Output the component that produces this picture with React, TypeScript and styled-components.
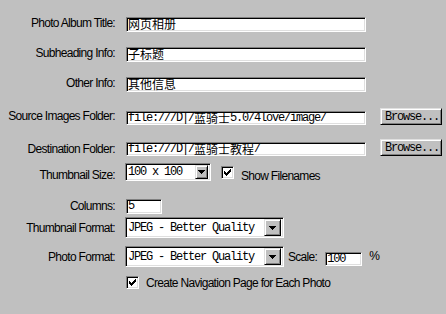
import React from "react";
import styled, { createGlobalStyle } from "styled-components";

const Global = createGlobalStyle`
  html, body {
    margin: 0;
    padding: 0;
    background: #c0c0c0;
  }
  body {
    width: 446px;
    height: 314px;
    overflow: hidden;
  }
`;

const Dialog = styled.div`
  box-sizing: border-box;
  width: 446px;
  height: 314px;
  background: #c0c0c0;
  display: flex;
  flex-direction: column;
`;

const Row = styled.div<{ $h: number; $mt: number; $align?: string }>`
  display: flex;
  align-items: ${(p) => p.$align || "flex-start"};
  height: ${(p) => p.$h}px;
  margin-top: ${(p) => p.$mt}px;
  flex-shrink: 0;
`;

const Label = styled.div<{ $dy: number }>`
  width: 115px;
  margin-right: 11px;
  flex-shrink: 0;
  align-self: flex-start;
  margin-top: ${(p) => p.$dy}px;
  text-align: right;
  font-family: "Liberation Sans", Arial, sans-serif;
  font-size: 12px;
  letter-spacing: -0.7px;
  line-height: 14px;
  color: #000;
  white-space: nowrap;
`;

const InlineText = styled.span<{ $ml: number; $dy?: number }>`
  margin-left: ${(p) => p.$ml}px;
  align-self: flex-start;
  margin-top: ${(p) => p.$dy || 0}px;
  font-family: "Liberation Sans", Arial, sans-serif;
  font-size: 12px;
  letter-spacing: -0.7px;
  line-height: 14px;
  color: #000;
  white-space: nowrap;
`;

const Sunken = styled.div<{ $w: number; $h: number; $mt?: number; $ml?: number }>`
  box-sizing: border-box;
  width: ${(p) => p.$w}px;
  height: ${(p) => p.$h}px;
  margin-top: ${(p) => p.$mt || 0}px;
  margin-left: ${(p) => p.$ml || 0}px;
  flex-shrink: 0;
  background: #fff;
  border-top: 1px solid #808080;
  border-left: 1px solid #808080;
  border-bottom: 1px solid #fff;
  border-right: 1px solid #fff;
  box-shadow: inset 1px 1px 0 #000, inset -1px -1px 0 #dfdfdf;
`;

const TextField = styled(Sunken)`
  padding: 0 1px 0 1px;
  white-space: nowrap;
  font-family: "Liberation Mono", monospace;
  font-size: 12px;
  letter-spacing: -1.2px;
  line-height: ${(p) => p.$h - 2}px;
  color: #000;
`;

const Cjk = styled.span`
  font-family: "Noto Sans CJK SC", sans-serif;
  font-size: 12px;
  letter-spacing: 0;
  line-height: 11px;
  display: inline-block;
  vertical-align: top;
`;

const Select = styled(Sunken)`
  display: flex;
  align-items: center;
  justify-content: space-between;
  padding: 2px 2px 2px 2px;
`;

const SelectText = styled.span`
  font-family: "Liberation Mono", monospace;
  font-size: 12px;
  letter-spacing: -1.2px;
  line-height: 14px;
  color: #000;
  white-space: nowrap;
`;

const Raised = styled.div`
  box-sizing: border-box;
  background: #c0c0c0;
  border-top: 1px solid #dfdfdf;
  border-left: 1px solid #dfdfdf;
  border-right: 1px solid #000;
  border-bottom: 1px solid #000;
  box-shadow: inset 1px 1px 0 #fff, inset -1px -1px 0 #808080;
  display: flex;
  align-items: center;
  justify-content: center;
  flex-shrink: 0;
`;

const DropButton = styled(Raised)<{ $w: number; $h: number }>`
  width: ${(p) => p.$w}px;
  height: ${(p) => p.$h}px;
`;

const Button = styled(Raised)`
  width: 62px;
  height: 17px;
  margin-left: 14px;
  font-family: "Liberation Mono", monospace;
  font-size: 12px;
  letter-spacing: -1.2px;
  line-height: 14px;
  color: #000;
  padding-left: 2px;
`;

const CheckBox = styled(Sunken)`
  display: flex;
  align-items: center;
  justify-content: center;
`;

const Arrow = () => (
  <svg width="7" height="4" viewBox="0 0 7 4" shapeRendering="crispEdges">
    <rect x="0" y="0" width="7" height="1" fill="#000" />
    <rect x="1" y="1" width="5" height="1" fill="#000" />
    <rect x="2" y="2" width="3" height="1" fill="#000" />
    <rect x="3" y="3" width="1" height="1" fill="#000" />
  </svg>
);

const checkPixels: [number, number][] = [
  [6, 0],
  [5, 1], [6, 1],
  [0, 2], [4, 2], [5, 2], [6, 2],
  [0, 3], [1, 3], [3, 3], [4, 3], [5, 3],
  [0, 4], [1, 4], [2, 4], [3, 4], [4, 4],
  [1, 5], [2, 5], [3, 5],
  [2, 6],
];

const Check = () => (
  <svg width="7" height="7" viewBox="0 0 7 7" shapeRendering="crispEdges">
    {checkPixels.map(([x, y]) => (
      <rect key={`${x}-${y}`} x={x} y={y} width="1" height="1" fill="#000" />
    ))}
  </svg>
);

export default function App() {
  return (
    <>
      <Global />
      <Dialog>
        <Row $h={15} $mt={17}>
          <Label $dy={-1}>Photo Album Title:</Label>
          <TextField $w={240} $h={15}>
            <Cjk>网页相册</Cjk>
          </TextField>
        </Row>
        <Row $h={15} $mt={15}>
          <Label $dy={-1}>Subheading Info:</Label>
          <TextField $w={240} $h={15}>
            <Cjk>子标题</Cjk>
          </TextField>
        </Row>
        <Row $h={15} $mt={15}>
          <Label $dy={-1}>Other Info:</Label>
          <TextField $w={240} $h={15}>
            <Cjk>其他信息</Cjk>
          </TextField>
        </Row>
        <Row $h={17} $mt={16} $align="flex-end">
          <Label $dy={1}>Source Images Folder:</Label>
          <TextField $w={240} $h={14}>
            file:///D|/<Cjk>蓝骑士</Cjk>5.0/4love/image/
          </TextField>
          <Button>Browse...</Button>
        </Row>
        <Row $h={18} $mt={14}>
          <Label $dy={3}>Destination Folder:</Label>
          <TextField $w={240} $h={14} $mt={3}>
            file:///D|/<Cjk>蓝骑士教程</Cjk>/
          </TextField>
          <Button>Browse...</Button>
        </Row>
        <Row $h={18} $mt={6} $align="center">
          <Label $dy={5}>Thumbnail Size:</Label>
          <Select $w={86} $h={18} $ml={-1}>
            <SelectText>100 x 100</SelectText>
            <DropButton $w={13} $h={14}>
              <Arrow />
            </DropButton>
          </Select>
          <CheckBox $w={13} $h={13} $ml={10}>
            <Check />
          </CheckBox>
          <InlineText $ml={7} $dy={6}>Show Filenames</InlineText>
        </Row>
        <Row $h={15} $mt={18}>
          <Label $dy={0}>Columns:</Label>
          <TextField $w={36} $h={15}>
            5
          </TextField>
        </Row>
        <Row $h={21} $mt={3}>
          <Label $dy={4}>Thumbnail Format:</Label>
          <Select $w={159} $h={21} $ml={-1}>
            <SelectText>JPEG - Better Quality</SelectText>
            <DropButton $w={17} $h={17}>
              <Arrow />
            </DropButton>
          </Select>
        </Row>
        <Row $h={21} $mt={8} $align="center">
          <Label $dy={4}>Photo Format:</Label>
          <Select $w={159} $h={21} $ml={-1}>
            <SelectText>JPEG - Better Quality</SelectText>
            <DropButton $w={17} $h={17}>
              <Arrow />
            </DropButton>
          </Select>
          <InlineText $ml={4} $dy={4}>Scale:</InlineText>
          <TextField $w={37} $h={14} $ml={8} $mt={5}>
            100
          </TextField>
          <InlineText $ml={7} $dy={3}>%</InlineText>
        </Row>
        <Row $h={13} $mt={9}>
          <CheckBox $w={13} $h={13} $ml={126}>
            <Check />
          </CheckBox>
          <InlineText $ml={7} $dy={0}>Create Navigation Page for Each Photo</InlineText>
        </Row>
      </Dialog>
    </>
  );
}
